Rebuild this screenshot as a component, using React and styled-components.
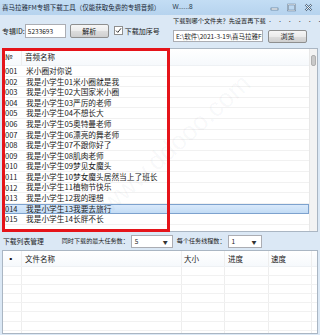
import React from 'react';
import styled, { createGlobalStyle } from 'styled-components';

const GlobalStyle = createGlobalStyle`
  html, body { margin: 0; padding: 0; background: #fff; }
  body { font-family: "Noto Sans CJK SC", "Liberation Sans", sans-serif; }
`;

const Window = styled.div`
  position: relative;
  width: 320px;
  height: 335px;
  background: #dbe8f5;
  display: flex;
  flex-direction: column;
  overflow: hidden;
  font-size: 7.5px;
  line-height: 1;
  color: #1a1a1a;
`;

const TitleBar = styled.div`
  height: 15px;
  flex: none;
  display: flex;
  align-items: center;
  padding-left: 2px;
  background: linear-gradient(#c3ddf4, #b6d3ee);
`;

const Title = styled.span`
  font-size: 6.5px;
  color: #1c2a38;
  white-space: nowrap;
`;

const SubTitle = styled.span`
  margin-left: 12px;
  font-size: 6.5px;
  color: #2a3a4a;
  font-family: "Liberation Sans", sans-serif;
`;

const Controls = styled.div`
  margin-left: auto;
  display: flex;
  align-items: center;
  gap: 8px;
  padding-right: 7px;
`;

const Toolbar = styled.div`
  height: 33px;
  flex: none;
  display: flex;
`;

const LeftGroup = styled.div`
  width: 171px;
  flex: none;
  padding: 9px 0 0 2px;
  display: flex;
  align-items: flex-start;
`;

const Label = styled.span`
  font-size: 7px;
  white-space: nowrap;
  line-height: 14px;
`;

const TextBox = styled.div`
  box-sizing: border-box;
  width: ${p => p.$w}px;
  height: ${p => p.$h}px;
  flex: none;
  background: #fff;
  border: 1px solid #abadb3;
  font-size: 6.5px;
  display: flex;
  align-items: center;
  padding-left: 2px;
  white-space: nowrap;
  overflow: hidden;
`;

const Button = styled.div`
  box-sizing: border-box;
  width: 39px;
  height: ${p => p.$h}px;
  flex: none;
  margin-left: ${p => p.$ml}px;
  border: 1px solid #8e8f8f;
  border-radius: 2px;
  background: linear-gradient(#f6f6f6 0%, #ebebeb 50%, #dddddd 51%, #cfcfcf 100%);
  display: flex;
  align-items: center;
  justify-content: center;
  font-size: 7px;
`;

const CheckBox = styled.div`
  box-sizing: border-box;
  width: 9px;
  height: 9px;
  flex: none;
  margin: 2px 2px 0 5px;
  border: 1px solid #8f8f8f;
  background: #fff;
  display: flex;
  align-items: center;
  justify-content: center;
`;

const RightGroup = styled.div`
  display: flex;
  flex-direction: column;
  padding-top: 1px;
  gap: 4px;
`;

const FolderLabel = styled.div`
  height: 10px;
  display: flex;
  align-items: center;
  white-space: nowrap;
  font-size: 6.2px;
`;

const Dots = styled.span`
  font-size: 4.5px;
  letter-spacing: 5.4px;
  margin-right: -5.4px;
  color: #333;
  margin-left: 2px;
`;

const Row = styled.div`
  display: flex;
  align-items: flex-start;
`;

const ListBox = styled.div`
  position: relative;
  margin: 0 2px;
  height: ${p => p.$h}px;
  flex: none;
  box-sizing: border-box;
  border: 1px solid #aab6c3;
  background: #fff;
  display: flex;
  overflow: hidden;
`;

const ListBody = styled.div`
  flex: 1;
  display: flex;
  flex-direction: column;
`;

const HeaderRow = styled.div`
  height: ${p => p.$h}px;
  flex: none;
  display: flex;
  align-items: center;
  background: linear-gradient(#ffffff, #f6f9fc);
  border-bottom: 1px solid #eef1f4;
`;

const Cell = styled.div`
  box-sizing: border-box;
  width: ${p => (p.$w ? `${p.$w}px` : 'auto')};
  flex: ${p => (p.$w ? 'none' : '1')};
  padding-left: ${p => p.$pl ?? 2}px;
  height: 100%;
  display: flex;
  align-items: center;
  white-space: nowrap;
  font-size: ${p => (p.$big ? '7.7px' : 'inherit')};
  border-right: ${p => (p.$line ? '1px solid #eeeeee' : 'none')};
`;

const ItemRow = styled.div`
  box-sizing: border-box;
  height: ${p => p.$h}px;
  flex: none;
  display: flex;
  align-items: center;
  border-bottom: 1px solid #f1f1f1;
  background: ${p => (p.$sel ? 'linear-gradient(#dcebfc, #c3dcf5)' : 'transparent')};
  outline: ${p => (p.$sel ? '1px solid #7da2ce' : 'none')};
  outline-offset: -1px;
`;

const ScrollTrack = styled.div`
  width: 7px;
  flex: none;
  background: #f3f3f3;
  border-left: 1px solid #e8e8e8;
  padding-top: 6px;
  display: flex;
  justify-content: center;
`;

const Thumb = styled.div`
  width: 5px;
  height: 11px;
  border-radius: 2px;
  background: #c9c9c9;
  border: 1px solid #b0b0b0;
  box-sizing: border-box;
`;

const Options = styled.div`
  height: 18px;
  flex: none;
  display: flex;
  align-items: center;
  padding-left: 3px;
  white-space: nowrap;
  font-size: 6.2px;
`;

const OptionLabel = styled.span`
  margin-left: ${p => p.$ml ?? 0}px;
  font-size: ${p => p.$fs ?? 6.1}px;
`;

const Select = styled.div`
  box-sizing: border-box;
  width: ${p => p.$w}px;
  height: 13px;
  margin: 0 4px 0 2px;
  background: #fff;
  border: 1px solid #abadb3;
  display: flex;
  align-items: center;
  justify-content: space-between;
  padding: 0 4px 0 3px;
  font-size: 6.5px;
`;

const Arrow = styled.span`
  font-size: 5px;
  color: #333;
`;

const RedMark = styled.div`
  position: absolute;
  left: 2px;
  top: 48px;
  width: 168px;
  height: 184px;
  box-sizing: border-box;
  border: 3px solid #e5141a;
  pointer-events: none;
`;

const Watermark = styled.div`
  position: absolute;
  left: 80px;
  top: 130px;
  font-family: "Liberation Sans", sans-serif;
  font-size: 26px;
  color: rgba(60, 80, 100, 0.045);
  transform: rotate(-42deg);
  pointer-events: none;
  white-space: nowrap;
`;

const tracks = [
  '米小圈对你说',
  '我是小学生01米小圈就是我',
  '我是小学生02大国家米小圈',
  '我是小学生03严厉的老师',
  '我是小学生04不想长大',
  '我是小学生05奥特曼老师',
  '我是小学生06漂亮的舞老师',
  '我是小学生07不跟你好了',
  '我是小学生08肌肉老师',
  '我是小学生09梦见女魔头',
  '我是小学生10梦女魔头居然当上了班长',
  '我是小学生11植物节快乐',
  '我是小学生12我的理想',
  '我是小学生13我要去旅行',
  '我是小学生14长胖不长',
];

const CaptionButtons = () => (
  <Controls>
    <svg width="9" height="9" viewBox="0 0 9 9">
      <rect x="1" y="5" width="7" height="2" fill="#fff" stroke="#4a6580" strokeWidth="0.6" />
    </svg>
    <svg width="9" height="9" viewBox="0 0 9 9">
      <rect x="1" y="1.5" width="7" height="6" fill="none" stroke="#4a6580" strokeWidth="1.4" />
      <rect x="1" y="1.5" width="7" height="6" fill="none" stroke="#fff" strokeWidth="0.6" />
    </svg>
    <svg width="9" height="9" viewBox="0 0 9 9">
      <path d="M1.5 1.5 L7.5 7.5 M7.5 1.5 L1.5 7.5" stroke="#4a6580" strokeWidth="2" />
      <path d="M1.5 1.5 L7.5 7.5 M7.5 1.5 L1.5 7.5" stroke="#fff" strokeWidth="0.9" />
    </svg>
  </Controls>
);

export default function App() {
  const rowH = 10.6;
  return (
    <Window>
      <GlobalStyle />
      <TitleBar>
        <Title>喜马拉雅FM专辑下载工具（仅能获取免费的专辑音频）</Title>
        <SubTitle>W......8</SubTitle>
        <CaptionButtons />
      </TitleBar>

      <Toolbar>
        <LeftGroup>
          <Label>专辑ID:</Label>
          <TextBox $w={41} $h={14}>5233693</TextBox>
          <Button $h={14} $ml={4}>解析</Button>
          <CheckBox>
            <svg width="7" height="7" viewBox="0 0 7 7">
              <path d="M1 3.6 L2.8 5.4 L6 1.3" fill="none" stroke="#333" strokeWidth="1" />
            </svg>
          </CheckBox>
          <Label>下载加序号</Label>
        </LeftGroup>
        <RightGroup>
          <FolderLabel>
            下载到哪个文件夹？先设置再下载<Dots>••••••</Dots>
          </FolderLabel>
          <Row>
            <TextBox $w={90} $h={12}>E:\软件\2021-3-19\喜马拉雅FM专</TextBox>
            <Button $h={13} $ml={5}>浏览</Button>
          </Row>
        </RightGroup>
      </Toolbar>

      <ListBox $h={184}>
        <ListBody>
          <HeaderRow $h={16}>
            <Cell $w={19} $pl={2} $line>№</Cell>
            <Cell $pl={3}>音频名称</Cell>
          </HeaderRow>
          {tracks.map((name, i) => (
            <ItemRow key={i} $h={rowH} $sel={i === 13}>
              <Cell $w={19} $pl={2}>{String(i + 1).padStart(3, '0')}</Cell>
              <Cell $pl={4} $big>{name}</Cell>
            </ItemRow>
          ))}
        </ListBody>
        <ScrollTrack>
          <Thumb />
        </ScrollTrack>
      </ListBox>

      <Options>
        <OptionLabel $fs={6.8}>下载列表管理</OptionLabel>
        <OptionLabel $ml={18}>同时下载的最大任务数：</OptionLabel>
        <Select $w={42}>5<Arrow>▼</Arrow></Select>
        <OptionLabel>每个任务线程数：</OptionLabel>
        <Select $w={34}>1<Arrow>▼</Arrow></Select>
      </Options>

      <ListBox $h={84}>
        <ListBody>
          <HeaderRow $h={15}>
            <Cell $w={19} $pl={4} $line>▪</Cell>
            <Cell $w={160} $pl={3} $line>文件名称</Cell>
            <Cell $w={43} $pl={2} $line>大小</Cell>
            <Cell $w={44} $pl={3} $line>进度</Cell>
            <Cell $w={43} $pl={2} $line>速度</Cell>
            <Cell />
          </HeaderRow>
          {Array.from({ length: 8 }).map((_, i) => (
            <ItemRow key={i} $h={9.1}>
              <Cell $w={19} $line />
              <Cell $w={160} $line />
              <Cell $w={43} $line />
              <Cell $w={44} $line />
              <Cell $w={43} $line />
              <Cell />
            </ItemRow>
          ))}
        </ListBody>
      </ListBox>

      <Watermark>www.ddooo.com</Watermark>
      <RedMark />
    </Window>
  );
}
